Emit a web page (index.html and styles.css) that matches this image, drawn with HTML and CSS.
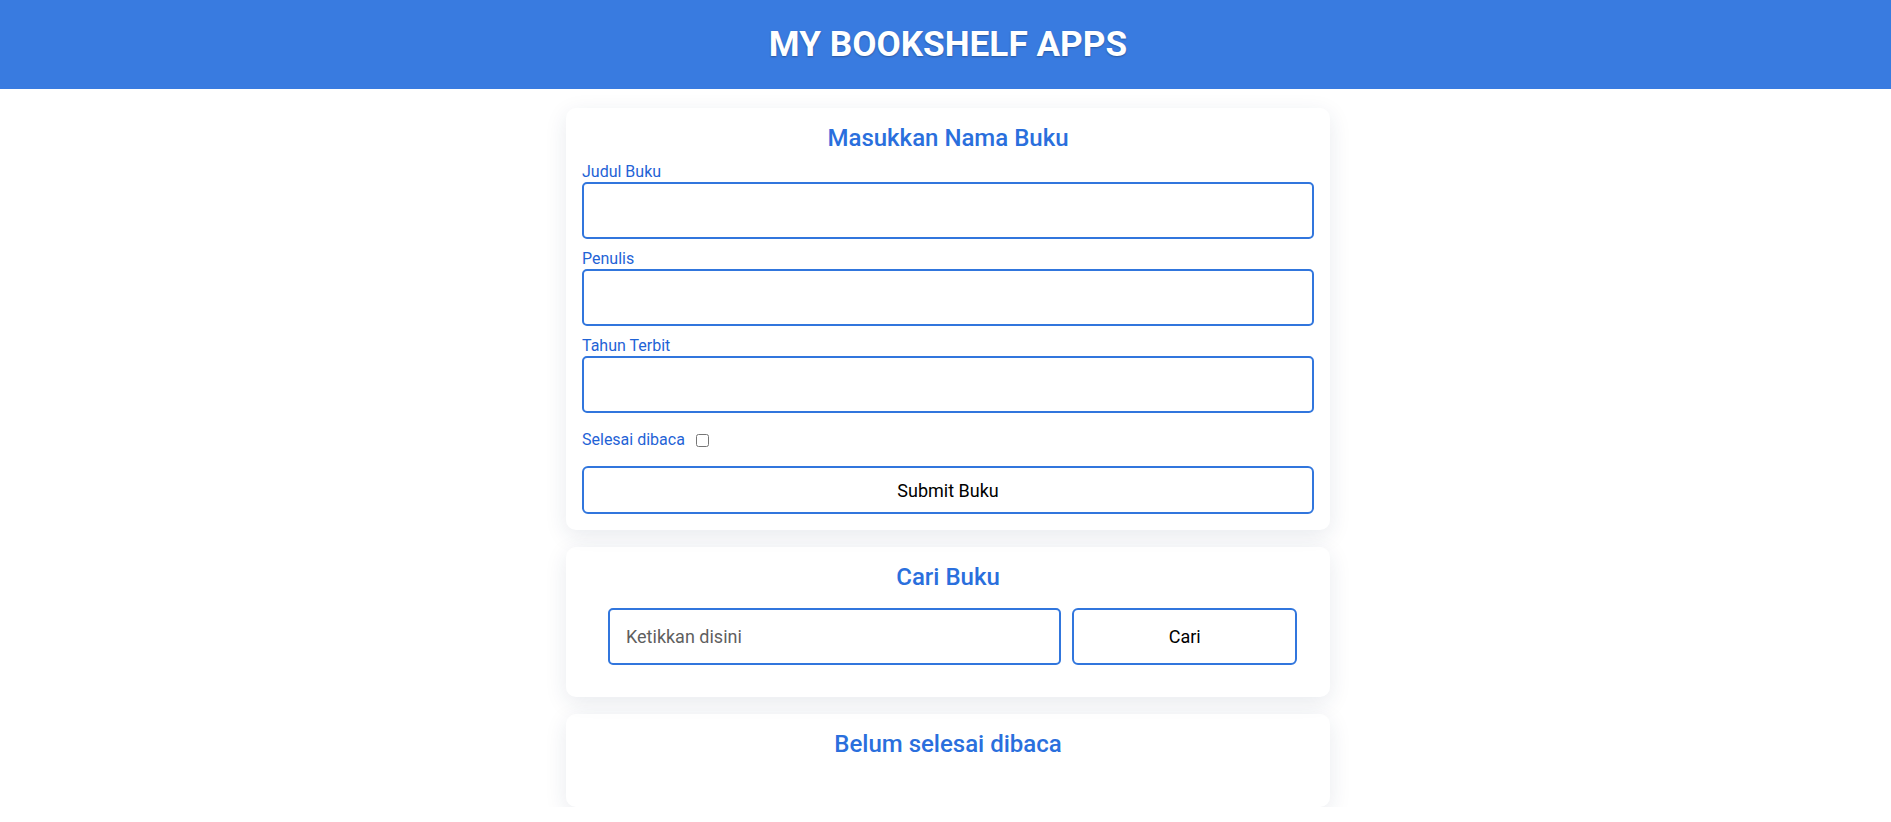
FILE: index.html
```html
<!DOCTYPE html>
<html lang="id">
<head>
<meta charset="utf-8">
<title>Bookshelf Apps</title>
<link rel="stylesheet" href="styles.css">
</head>
<body>
<header class="head-bar">
  <h1 class="app-title">MY BOOKSHELF APPS</h1>
</header>
<main class="main">
  <section class="card input-card">
    <h2 class="card-title">Masukkan Nama Buku</h2>
    <form class="book-form">
      <div class="field">
        <label class="field-label" for="inputBookTitle">Judul Buku</label>
        <input class="field-input" id="inputBookTitle" type="text">
      </div>
      <div class="field">
        <label class="field-label" for="inputBookAuthor">Penulis</label>
        <input class="field-input" id="inputBookAuthor" type="text">
      </div>
      <div class="field">
        <label class="field-label" for="inputBookYear">Tahun Terbit</label>
        <input class="field-input" id="inputBookYear" type="number">
      </div>
      <div class="check-row">
        <label class="field-label inline" for="inputBookIsComplete">Selesai dibaca</label>
        <input class="check" id="inputBookIsComplete" type="checkbox">
      </div>
      <button class="btn submit-btn" type="button">Submit Buku</button>
    </form>
  </section>

  <section class="card search-card">
    <h2 class="card-title">Cari Buku</h2>
    <form class="search-form">
      <input class="field-input search-input" type="text" placeholder="Ketikkan disini">
      <button class="btn search-btn" type="button">Cari</button>
    </form>
  </section>

  <section class="card shelf-card">
    <h2 class="card-title">Belum selesai dibaca</h2>
    <div class="book-list"></div>
  </section>
</main>
</body>
</html>
```

FILE: styles.css
```css
* {
  box-sizing: border-box;
}

html, body {
  margin: 0;
  padding: 0;
  background: #ffffff;
  font-family: Roboto, "Liberation Sans", Arial, sans-serif;
}

.head-bar {
  height: 89px;
  padding-left: 5px;
  background: #397be0;
  display: flex;
  align-items: center;
  justify-content: center;
}

.app-title {
  margin: 0;
  color: #ffffff;
  font-size: 35.2px;
  font-weight: 700;
  line-height: 1;
  text-shadow: 0 1px 2px rgba(0, 0, 0, 0.3);
}

.main {
  padding: 19px 0 0 5px;
  display: flex;
  flex-direction: column;
  align-items: center;
  gap: 17px;
}

.card {
  width: 764px;
  padding: 16px;
  border-radius: 10px;
  background: rgba(255, 255, 255, 0.5);
  box-shadow: 0 6px 22px rgba(30, 45, 90, 0.1);
}

.card-title {
  margin: 0;
  text-align: center;
  color: #2a6fdd;
  font-size: 24px;
  font-weight: 500;
  line-height: 28px;
}

.book-form {
  margin-top: 10px;
  display: flex;
  flex-direction: column;
}

.field {
  display: flex;
  flex-direction: column;
  margin-bottom: 10px;
}

.field-label {
  display: block;
  color: #1f63d6;
  font-size: 16px;
  font-weight: 400;
  line-height: 20px;
}

.field-label.inline {
  display: inline-block;
}

.field-input {
  height: 57px;
  width: 100%;
  border: 2px solid #3176dd;
  border-radius: 5px;
  background: #ffffff;
  padding: 0 16px;
  font-family: Roboto, "Liberation Sans", Arial, sans-serif;
  font-size: 18px;
  color: #222;
  outline: none;
}

.field-input::placeholder {
  color: #5f5f5f;
}

.check-row {
  display: flex;
  align-items: center;
  margin-top: 7px;
  height: 20px;
}

.check {
  width: 13px;
  height: 13px;
  margin: 0 0 0 11px;
}

.btn {
  background: #ffffff;
  border: 2px solid #3176dd;
  border-radius: 6px;
  color: #000000;
  font-family: Roboto, "Liberation Sans", Arial, sans-serif;
  font-size: 18px;
  cursor: pointer;
}

.submit-btn {
  margin-top: 16px;
  height: 48px;
  width: 100%;
}

.search-form {
  margin: 17px 0 16px;
  padding: 0 17px 0 26px;
  display: flex;
  gap: 11px;
}

.search-input {
  flex: 2 1 0;
  min-width: 0;
}

.search-btn {
  flex: 1 1 0;
  height: 57px;
}

.book-list {
  height: 33px;
}
```
